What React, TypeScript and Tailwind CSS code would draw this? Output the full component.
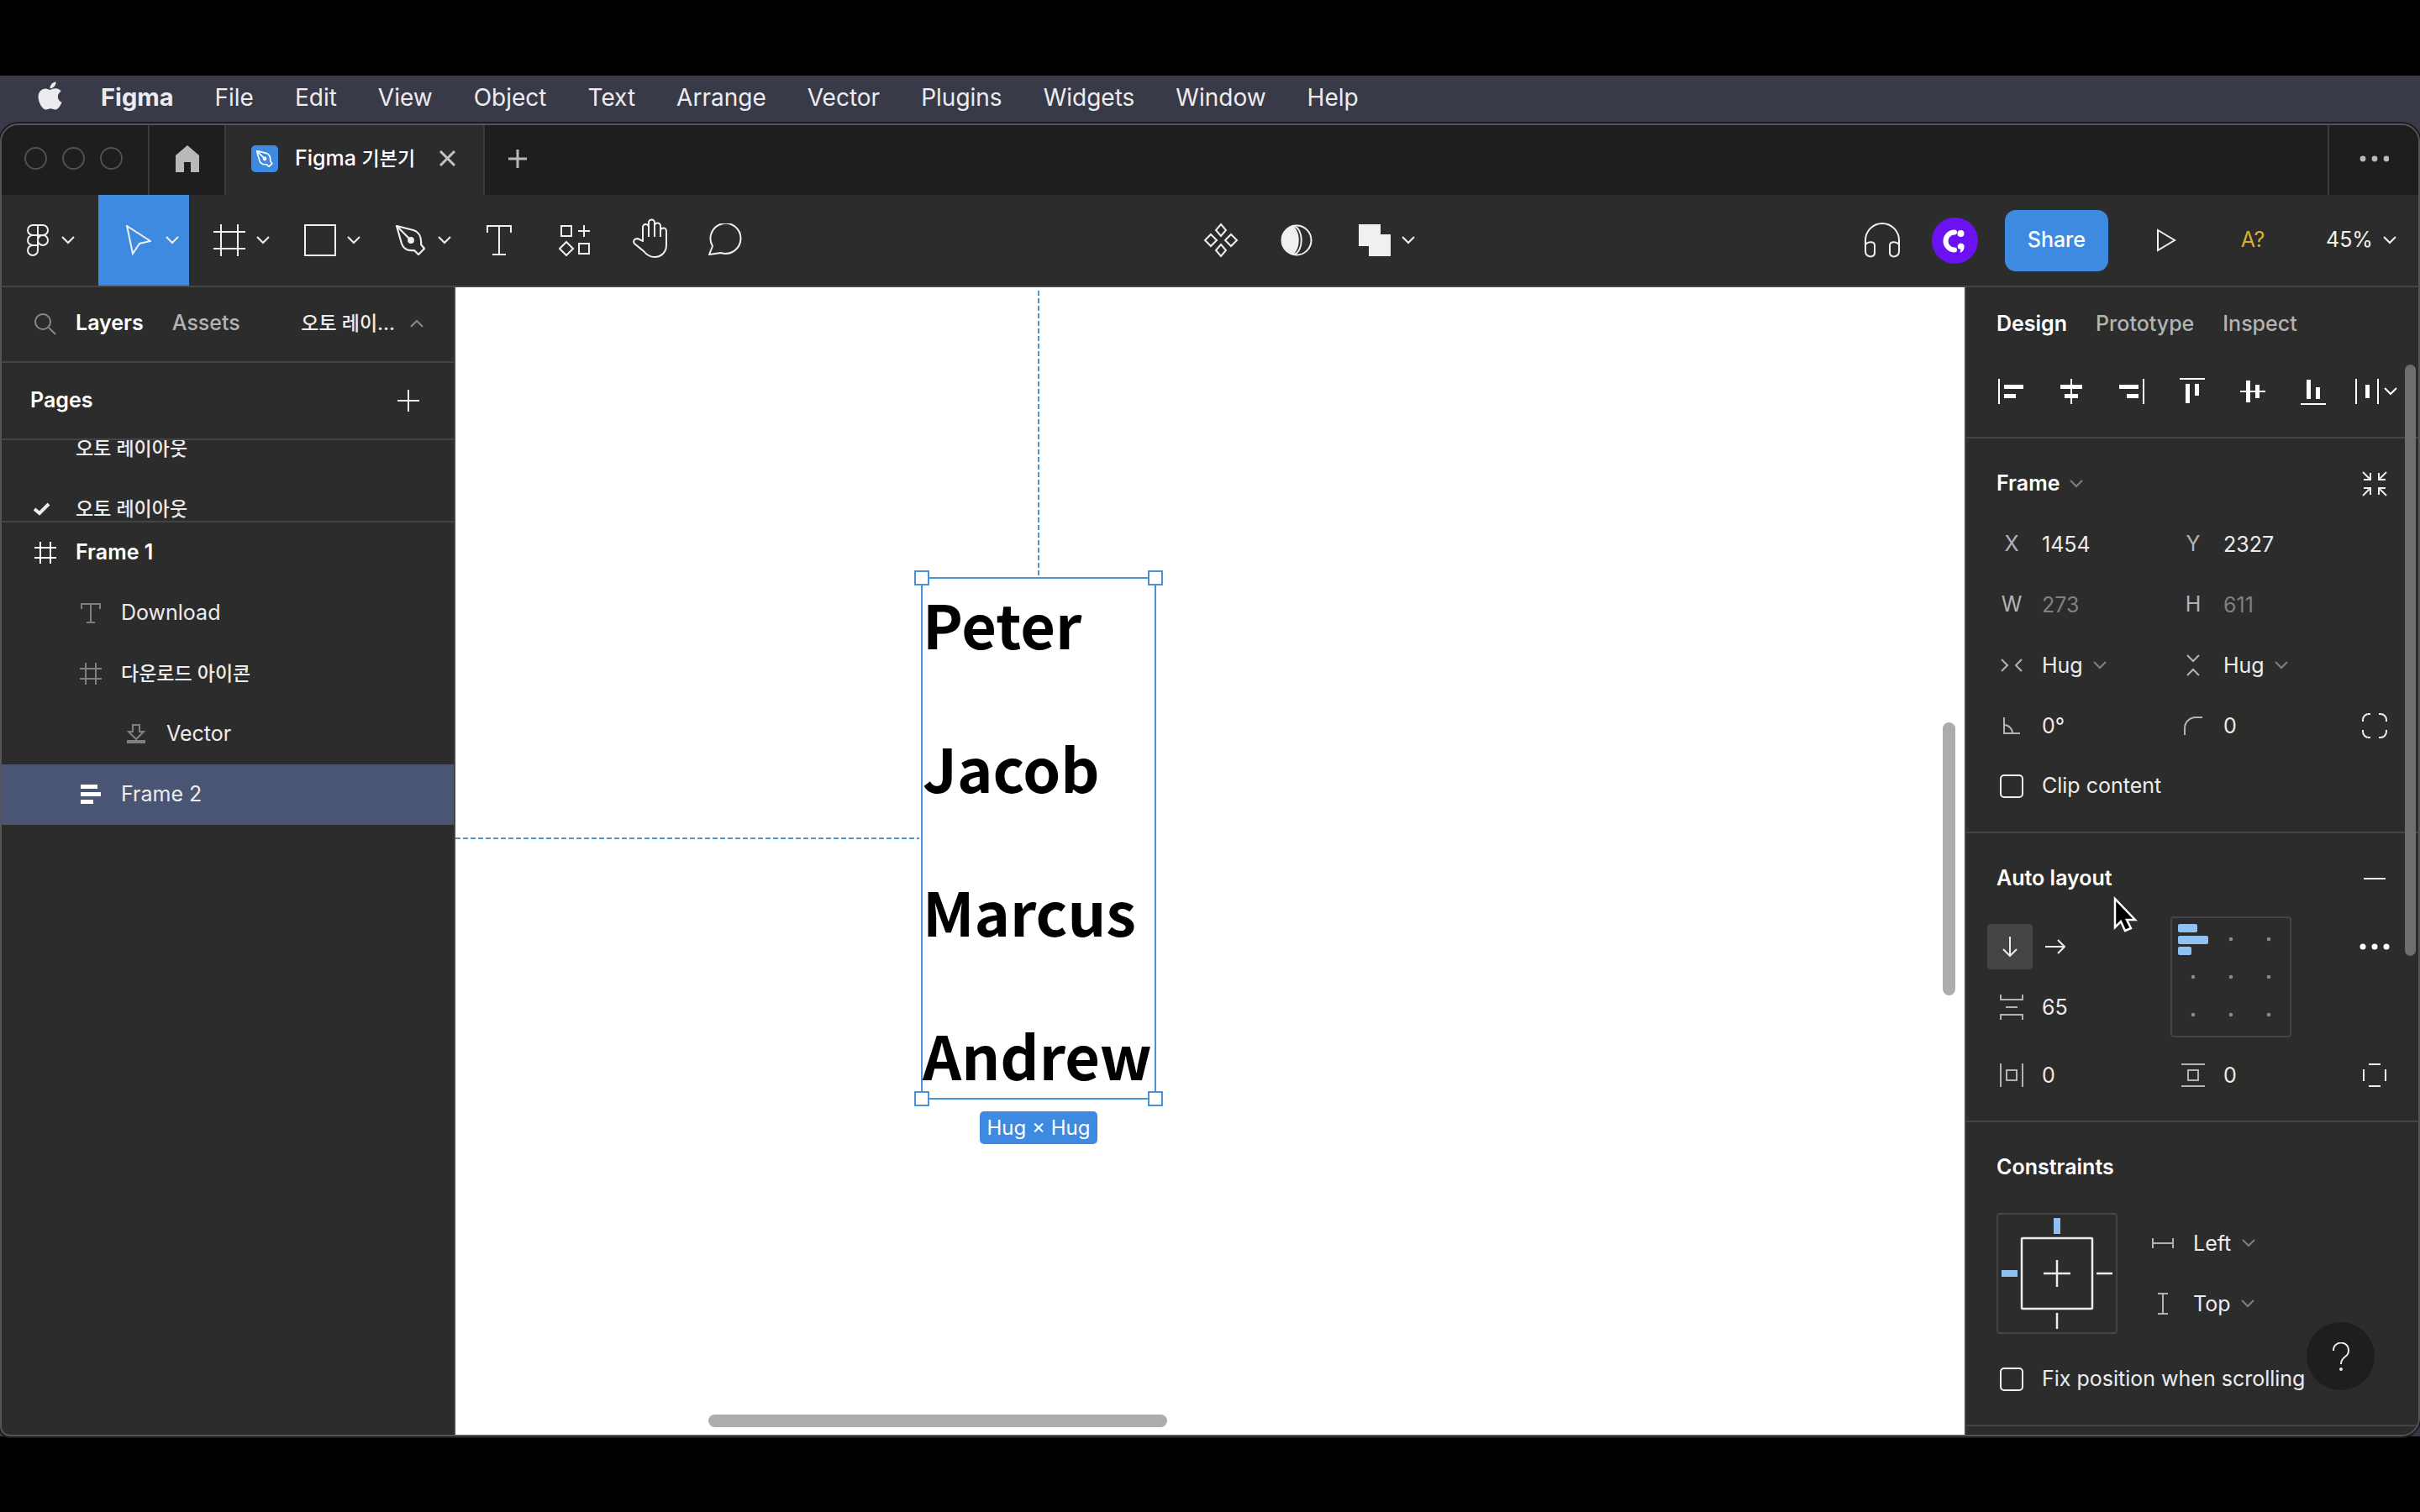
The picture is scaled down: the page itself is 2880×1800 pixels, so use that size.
import type { ReactNode } from "react";
import { FaApple } from "react-icons/fa";

const menus = [
  "File",
  "Edit",
  "View",
  "Object",
  "Text",
  "Arrange",
  "Vector",
  "Plugins",
  "Widgets",
  "Window",
  "Help",
];

const names = ["Peter", "Jacob", "Marcus", "Andrew"];

type IconProps = {
  w: number;
  h: number;
  stroke?: number;
  className?: string;
  children: ReactNode;
};

function Icon({ w, h, stroke = 2, className = "", children }: IconProps) {
  return (
    <svg
      width={w}
      height={h}
      viewBox={`0 0 ${w} ${h}`}
      fill="none"
      stroke="currentColor"
      strokeWidth={stroke}
      className={`shrink-0 ${className}`}
      aria-hidden="true"
    >
      {children}
    </svg>
  );
}

function Chevron({ className = "" }: { className?: string }) {
  return (
    <Icon w={16} h={10} className={className}>
      <path d="M1 1l7 7 7-7" />
    </Icon>
  );
}

function FrameIcon({ className = "" }: { className?: string }) {
  return (
    <Icon w={26} h={26} className={className}>
      <path d="M7 0v26M19 0v26M0 7h26M0 19h26" />
    </Icon>
  );
}

function PenIcon({ w = 36 }: { w?: number }) {
  return (
    <svg
      width={w}
      height={w}
      viewBox="0 0 36 36"
      fill="none"
      stroke="currentColor"
      strokeWidth={w < 30 ? 3 : 2.2}
      aria-hidden="true"
    >
      <path d="M1 1l20 5c6 2 10 8 9 17l4 5-7 7-5-5c-8 1-13-2-15-8z" strokeLinejoin="round" />
      <path d="M1 1l16 16" />
      <circle cx="18" cy="18" r="2.8" fill="currentColor" />
    </svg>
  );
}

function MenuBar() {
  return (
    <nav className="flex h-[55px] shrink-0 items-center bg-[#393a47] pb-1 pl-11 text-[28px] leading-9 text-[#ececf0]">
      <FaApple className="mb-1 mr-[45px] h-[38px] w-[31px]" />
      <ul className="flex items-center gap-[49px]">
        <li>
          <button className="text-[29px] font-bold">Figma</button>
        </li>
        {menus.map((m) => (
          <li key={m}>
            <button>{m}</button>
          </li>
        ))}
      </ul>
    </nav>
  );
}

function TabBar() {
  return (
    <div className="flex h-[83px] shrink-0 bg-[#1e1e1e] text-[#b9b9b9]">
      <div className="flex w-[176px] items-center gap-[18px] border-r-2 border-[#3b3b3b] pb-1 pl-[27px]">
        <button aria-label="Close window" className="size-[27px] rounded-full border-2 border-[#505050]" />
        <button aria-label="Minimize window" className="size-[27px] rounded-full border-2 border-[#505050]" />
        <button aria-label="Zoom window" className="size-[27px] rounded-full border-2 border-[#505050]" />
      </div>
      <button
        aria-label="Home"
        className="flex w-[91px] items-center justify-center border-r-2 border-[#3b3b3b] pb-1"
      >
        <Icon w={28} h={32}>
          <path d="M0 12L14 0l14 12v20H18V20h-8v12H0z" fill="currentColor" stroke="none" />
        </Icon>
      </button>
      <div className="flex w-[308px] items-center border-r-2 border-[#3b3b3b] bg-[#2c2c2c] pb-1 pl-[30px] font-medium text-white">
        <span className="mr-5 flex size-8 items-center justify-center rounded-[5px] bg-[#3d8ae0]">
          <PenIcon w={20} />
        </span>
        <span>
          Figma <span className="text-[23px]">기본기</span>
        </span>
        <button aria-label="Close tab" className="ml-auto mr-[33px] text-[#c4c4c4]">
          <Icon w={19} h={19} stroke={3}>
            <path d="M1 1l17 17M18 1L1 18" />
          </Icon>
        </button>
      </div>
      <button aria-label="New tab" className="flex w-[78px] items-center justify-center pb-1">
        <Icon w={22} h={22} stroke={3}>
          <path d="M11 0v22M0 11h22" />
        </Icon>
      </button>
      <button
        aria-label="More"
        className="ml-auto flex w-[108px] items-center justify-center border-l-2 border-[#3b3b3b] pb-1"
      >
        <Icon w={36} h={8}>
          <g fill="currentColor" stroke="none">
            <circle cx="5" cy="4" r="3.4" />
            <circle cx="19" cy="4" r="3.4" />
            <circle cx="33" cy="4" r="3.4" />
          </g>
        </Icon>
      </button>
    </div>
  );
}

function Tool({
  label,
  active,
  menu,
  children,
}: {
  label: string;
  active?: boolean;
  menu?: boolean;
  children: ReactNode;
}) {
  return (
    <button
      aria-label={label}
      className={`flex h-full items-center ${menu ? "w-[108px] pr-3 pl-4" : "w-[90px]"} ${
        active ? "bg-[#3d8ae0]" : ""
      }`}
    >
      <span className="flex flex-1 justify-center">{children}</span>
      {menu && <Chevron />}
    </button>
  );
}

function Toolbar() {
  return (
    <div className="flex h-[110px] shrink-0 items-center border-b-2 border-[#444] bg-[#2c2c2c] text-[#f0f0f0]">
      <div className="flex h-full items-center">
        <button aria-label="Main menu" className="flex h-full w-[115px] items-center gap-[15px] pl-[30px]">
          <Icon w={26} h={38} stroke={2}>
            <path d="M13 1H7a6 6 0 0 0 0 12h6zM13 1h6a6 6 0 0 1 0 12h-6zM13 13H7a6 6 0 0 0 0 12h6zM13 25H7a6 6 0 1 0 6 6z" />
            <circle cx="19" cy="19" r="6" />
          </Icon>
          <Chevron />
        </button>
        <Tool label="Move" menu active>
          <Icon w={30} h={36} stroke={2}>
            <path d="M1 1l28 18-13 3-8 12z" />
          </Icon>
        </Tool>
        <Tool label="Frame" menu>
          <Icon w={38} h={38}>
            <path d="M9 0v38M29 0v38M0 9h38M0 29h38" />
          </Icon>
        </Tool>
        <Tool label="Rectangle" menu>
          <Icon w={38} h={38}>
            <path d="M1 1h36v36H1z" />
          </Icon>
        </Tool>
        <Tool label="Pen" menu>
          <PenIcon />
        </Tool>
        <Tool label="Text">
          <Icon w={30} h={38} stroke={2}>
            <path d="M1 10V2h28v8M15 2v34M7 36h16" />
          </Icon>
        </Tool>
        <Tool label="Resources">
          <Icon w={38} h={38} stroke={2}>
            <path d="M3 2h12v12H3zM30 1v14M23 8h14M24 23h12v12H24zM9 21l8 8-8 8-8-8z" />
          </Icon>
        </Tool>
        <Tool label="Hand">
          <Icon w={42} h={48} stroke={2} className="-mt-1">
            <path
              d="M12 27V11a3.5 3.5 0 0 1 7-1V5a3.5 3.5 0 0 1 7 0v4a3.5 3.5 0 0 1 7 0v6a3.5 3.5 0 0 1 7 0v17c0 8-6 14-14 14-5 0-9-2-13-7L2 30c-3-5 3-7 6-5zM19 10v12M26 8v14M33 13v9"
              strokeLinejoin="round"
            />
          </Icon>
        </Tool>
        <Tool label="Comment">
          <Icon w={42} h={40} stroke={2}>
            <path d="M5 27A18 18 0 1 1 15 35L1 37z" strokeLinejoin="round" />
          </Icon>
        </Tool>
      </div>
      <div className="flex h-full flex-1 items-center justify-center">
        <Tool label="Create component">
          <Icon w={42} h={42} stroke={2}>
            <path d="M21 2l6 7-6 7-6-7zM21 26l6 7-6 7-6-7zM9 14l7 7-7 7-7-7zM33 14l7 7-7 7-7-7z" />
          </Icon>
        </Tool>
        <Tool label="Use as mask">
          <Icon w={38} h={38} stroke={2}>
            <circle cx="19" cy="19" r="17.5" />
            <path d="M15 2C24 9 24 29 15 36 6 34 1 27 1 19S6 4 15 2z" fill="currentColor" stroke="none" />
            <path d="M15 2c13 2 13 32 0 34" />
          </Icon>
        </Tool>
        <Tool label="Union selection" menu>
          <Icon w={38} h={38}>
            <path d="M0 0h26v12h12v26H12V26H0z" fill="currentColor" stroke="none" />
          </Icon>
        </Tool>
      </div>
      <div className="flex h-full items-center font-medium">
        <Tool label="Start conversation">
          <Icon w={44} h={42} stroke={2}>
            <path d="M2 34V21a20 20 0 0 1 40 0v13" />
            <path
              d="M2 27c1-4 11-6 11 0v9c0 4-4 5-7 4s-4-3-4-6zM42 27c-1-4-11-6-11 0v9c0 4 4 5 7 4s4-3 4-6z"
              strokeLinejoin="round"
            />
          </Icon>
        </Tool>
        <button aria-label="Account" className="ml-3.5 size-[55px] rounded-full bg-[#6b12f3] text-white">
          <svg viewBox="0 0 55 55" fill="none" aria-hidden="true">
            <path d="M27 17.500a10.500 10.500 0 0 0 0 21" stroke="currentColor" strokeWidth="6" strokeLinecap="round" />
            <circle cx="34.500" cy="19" r="4" fill="currentColor" />
            <path d="M31 36a4 4 0 1 1 7.500 0c-.5 3-2 5-5 6l1-4.500c-2 0-3-.5-3.500-1.500z" fill="currentColor" />
          </svg>
        </button>
        <button className="ml-8 h-[73px] rounded-[13px] bg-[#3d8ae0] px-[27px] text-white">Share</button>
        <button aria-label="Present" className="ml-6 flex w-[90px] justify-center">
          <Icon w={24} h={30}>
            <path d="M2 3l20 12L2 27z" />
          </Icon>
        </button>
        <button className="w-[116px] font-normal text-[#d8b02f]">A?</button>
        <button className="flex w-[139px] items-center gap-3 pl-[29px] font-normal">
          45%
          <Chevron />
        </button>
      </div>
    </div>
  );
}

const layers = [
  { name: "Frame 1", icon: "frame", pad: "pl-[34px]", text: "font-semibold text-white", tint: "text-white" },
  { name: "Download", icon: "text", pad: "pl-[88px]", text: "", tint: "text-[#808080]" },
  { name: "다운로드 아이콘", icon: "frame", pad: "pl-[88px]", text: "text-[23px] font-medium", tint: "text-[#808080]" },
  { name: "Vector", icon: "vector", pad: "pl-[142px]", text: "", tint: "text-[#808080]" },
  { name: "Frame 2", icon: "stack", pad: "pl-[88px]", text: "", tint: "text-white" },
];

function LayerIcon({ icon }: { icon: string }) {
  if (icon === "frame") return <FrameIcon />;
  if (icon === "text")
    return (
      <Icon w={24} h={26}>
        <path d="M1 8V2h22v6M12 2v22M7 24h10" />
      </Icon>
    );
  if (icon === "vector")
    return (
      <Icon w={24} h={24}>
        <path d="M8 1h8v8h5l-9 9-9-9h5z" />
        <path d="M1 21h22" stroke="currentColor" strokeWidth="4" />
      </Icon>
    );
  return (
    <Icon w={24} h={26}>
      <path d="M0 1h20v5H0zM0 10h24v5H0zM0 19h15v5H0z" fill="currentColor" stroke="none" />
    </Icon>
  );
}

function LayersPanel() {
  return (
    <aside className="flex w-[540px] shrink-0 flex-col overflow-hidden border-r-2 border-[#444] bg-[#2c2c2c]">
      <div className="flex h-[90px] shrink-0 items-center border-b-2 border-[#444] pb-0.5 pl-[38px]">
        <button aria-label="Search" className="mr-[23px] text-[#8a8a8a]">
          <Icon w={27} h={27}>
            <circle cx="11" cy="11" r="9" />
            <path d="M18 18l8 8" />
          </Icon>
        </button>
        <button className="mr-[34px] font-semibold text-white">Layers</button>
        <button className="font-medium text-[#b3b3b3]">Assets</button>
        <button className="ml-auto mr-9 flex items-center gap-[18px] text-[23px] font-medium">
          오토 레이...
          <Chevron className="rotate-180 text-[#8a8a8a]" />
        </button>
      </div>
      <div className="flex h-[92px] shrink-0 items-center justify-between border-b-2 border-[#444] pl-[34px] pr-[41px]">
        <h2 className="font-semibold text-white">Pages</h2>
        <button aria-label="Add page">
          <Icon w={26} h={26}>
            <path d="M13 0v26M0 13h26" />
          </Icon>
        </button>
      </div>
      <div className="h-[98px] shrink-0 overflow-hidden border-b-2 border-[#444] text-[23px] font-medium">
        <ul className="-mt-[26px]">
          <li className="flex h-[72px] items-center pl-[88px]">오토 레이아웃</li>
          <li className="flex h-[72px] items-center pl-[38px]">
            <Icon w={20} h={16} stroke={4} className="mr-[30px]">
              <path d="M1 8l6 5L18 2" />
            </Icon>
            오토 레이아웃
          </li>
        </ul>
      </div>
      <ul>
        {layers.map((l) => (
          <li
            key={l.name}
            className={`flex h-[72px] items-center gap-[18px] ${l.pad} ${l.name === "Frame 2" ? "bg-[#4a5573]" : ""}`}
          >
            <span className={`flex w-9 justify-center ${l.tint}`}>
              <LayerIcon icon={l.icon} />
            </span>
            <span className={l.text}>{l.name}</span>
          </li>
        ))}
      </ul>
    </aside>
  );
}

function Canvas() {
  return (
    <main className="relative min-w-0 flex-1 overflow-hidden bg-white">
      {/* constraint guides */}
      <svg className="absolute left-0 top-0 h-full w-full" stroke="#4f95cf" strokeWidth="2" aria-hidden="true">
        <path d="M694 4v340" strokeDasharray="6 3" />
        <path d="M0 656h552" strokeDasharray="6 3" />
      </svg>
      <div className="absolute left-[554px] top-[345px] border-2 border-[#4a93d6]">
        <div className="flex flex-col gap-[66px] pr-[3px] font-['Noto_Sans_CJK_KR',sans-serif] text-[72px] font-bold leading-[105px] text-black">
          {names.map((n) => (
            <p key={n}>{n}</p>
          ))}
        </div>
        <span className="absolute -left-2.5 -top-2.5 size-[18px] border-2 border-[#4a93d6] bg-white" />
        <span className="absolute -right-2.5 -top-2.5 size-[18px] border-2 border-[#4a93d6] bg-white" />
        <span className="absolute -bottom-2.5 -left-2.5 size-[18px] border-2 border-[#4a93d6] bg-white" />
        <span className="absolute -bottom-2.5 -right-2.5 size-[18px] border-2 border-[#4a93d6] bg-white" />
        <div className="absolute inset-x-0 top-full flex justify-center pt-4">
          <span className="whitespace-nowrap rounded-[5px] bg-[#3d8ae0] px-[9px] py-1 text-[24px] leading-[31px] text-white">
            Hug × Hug
          </span>
        </div>
      </div>
      <div className="absolute right-[11px] top-[518px] h-[325px] w-[15px] rounded-full bg-[#acacac]" />
      <div className="absolute bottom-[9px] left-[301px] h-[15px] w-[546px] rounded-full bg-[#acacac]" />
    </main>
  );
}

function Field({
  label,
  value,
  icon,
  muted,
}: {
  label: string;
  value: string;
  icon?: ReactNode;
  muted?: boolean;
}) {
  return (
    <label className="flex h-[72px] items-center gap-[18px]">
      <span className="flex w-9 shrink-0 justify-center text-[#b3b3b3]">{icon ?? label}</span>
      <input
        aria-label={label}
        defaultValue={value}
        className={`w-[120px] bg-transparent pt-0.5 outline-none ${muted ? "text-[#808080]" : ""}`}
      />
    </label>
  );
}

function SelectField({ label, value, icon }: { label: string; value: string; icon: ReactNode }) {
  return (
    <label className="flex h-[72px] items-center gap-[18px]">
      <span className="flex w-9 shrink-0 justify-center text-[#b3b3b3]">{icon}</span>
      <span className="flex items-center gap-3">
        <select aria-label={label} className="appearance-none bg-transparent pt-0.5 outline-none">
          <option>{value}</option>
        </select>
        <Chevron className="text-[#808080]" />
      </span>
    </label>
  );
}

function Check({ label }: { label: string }) {
  return (
    <label className="flex h-[72px] items-center gap-[22px] pl-1">
      <input type="checkbox" className="size-7 appearance-none rounded-[5px] border-2 border-[#f0f0f0]" />
      {label}
    </label>
  );
}

function AlignRow() {
  return (
    <div className="mb-[18px] flex h-[72px] pl-[17px] text-white">
      <button aria-label="Align left" className="flex w-[72px] items-center justify-center">
        <Icon w={30} h={30}>
          <path d="M1 0v30" />
          <path d="M7 7h23v5H7zM7 18h14v5H7z" fill="currentColor" stroke="none" />
        </Icon>
      </button>
      <button aria-label="Align horizontal centers" className="flex w-[72px] items-center justify-center">
        <Icon w={26} h={30}>
          <path d="M13 0v30" />
          <path d="M0 7h26v5H0zM5 18h16v5H5z" fill="currentColor" stroke="none" />
        </Icon>
      </button>
      <button aria-label="Align right" className="flex w-[72px] items-center justify-center">
        <Icon w={30} h={30}>
          <path d="M29 0v30" />
          <path d="M0 7h23v5H0zM9 18h14v5H9z" fill="currentColor" stroke="none" />
        </Icon>
      </button>
      <button aria-label="Align top" className="flex w-[72px] items-center justify-center">
        <Icon w={30} h={32}>
          <path d="M0 1h30" />
          <path d="M7 7h5v23H7zM18 7h5v14h-5z" fill="currentColor" stroke="none" />
        </Icon>
      </button>
      <button aria-label="Align vertical centers" className="flex w-[72px] items-center justify-center">
        <Icon w={30} h={26}>
          <path d="M0 13h30" />
          <path d="M7 0h5v26H7zM18 5h5v16h-5z" fill="currentColor" stroke="none" />
        </Icon>
      </button>
      <button aria-label="Align bottom" className="flex w-[72px] items-center justify-center">
        <Icon w={30} h={32}>
          <path d="M0 31h30" />
          <path d="M7 2h5v23H7zM18 11h5v14h-5z" fill="currentColor" stroke="none" />
        </Icon>
      </button>
      <button aria-label="Distribute" className="flex items-center gap-1.5 pl-[14px]">
        <Icon w={28} h={30}>
          <path d="M1 0v30M27 0v30" />
          <path d="M12 7h5v16h-5z" fill="currentColor" stroke="none" />
        </Icon>
        <Chevron />
      </button>
    </div>
  );
}

function FrameSection() {
  return (
    <section className="border-t-2 border-[#444] py-[18px] pl-9">
      <div className="grid grid-cols-[216px_216px_36px]">
        <button className="col-span-2 flex h-[72px] items-center gap-3 font-semibold text-white">
          Frame
          <Chevron className="text-[#808080]" />
        </button>
        <button aria-label="Resize to fit" className="flex items-center justify-center">
          <Icon w={30} h={30} stroke={2}>
            <path d="M1 1l8 8M29 1l-8 8M1 29l8-8M29 29l-8-8" />
            <path d="M2 10h8V2M28 10h-8V2M2 20h8v8M28 20h-8v8" />
          </Icon>
        </button>
        <Field label="X" value="1454" />
        <Field label="Y" value="2327" />
        <span />
        <Field label="W" value="273" muted />
        <Field label="H" value="611" muted />
        <span />
        <SelectField
          label="Horizontal resizing"
          value="Hug"
          icon={
            <Icon w={26} h={16}>
              <path d="M1 1l7 7-7 7M25 1l-7 7 7 7" />
            </Icon>
          }
        />
        <SelectField
          label="Vertical resizing"
          value="Hug"
          icon={
            <Icon w={16} h={26}>
              <path d="M1 1l7 7 7-7M1 25l7-7 7 7" />
            </Icon>
          }
        />
        <span />
        <Field
          label="Rotation"
          value="0°"
          icon={
            <Icon w={20} h={20}>
              <path d="M1 0v19h19M1 9a10 10 0 0 1 10 10" />
            </Icon>
          }
        />
        <Field
          label="Corner radius"
          value="0"
          icon={
            <Icon w={22} h={22}>
              <path d="M1 22v-8A13 13 0 0 1 14 1h8" />
            </Icon>
          }
        />
        <button aria-label="Independent corners" className="flex items-center justify-center">
          <Icon w={30} h={30}>
            <path d="M1 10V8a7 7 0 0 1 7-7h2M20 1h2a7 7 0 0 1 7 7v2M29 20v2a7 7 0 0 1-7 7h-2M10 29H8a7 7 0 0 1-7-7v-2" />
          </Icon>
        </button>
      </div>
      <Check label="Clip content" />
    </section>
  );
}

function AutoLayoutSection() {
  return (
    <section className="relative border-t-2 border-[#444] py-[18px] pl-9">
      <div className="grid grid-cols-[216px_216px_36px]">
        <h2 className="col-span-2 flex h-[72px] items-center font-semibold text-white">Auto layout</h2>
        <button aria-label="Remove auto layout" className="flex items-center justify-center">
          <Icon w={26} h={2}>
            <path d="M0 1h26" />
          </Icon>
        </button>
      </div>
      <div className="my-[9px] grid grid-cols-[216px_216px_36px]">
        <div>
          <div className="-ml-[11px] flex h-[72px] items-center">
            <button
              aria-label="Vertical direction"
              className="flex size-[54px] items-center justify-center rounded-[4px] bg-[#444]"
            >
              <Icon w={18} h={24}>
                <path d="M9 0v22M1 15l8 8 8-8" />
              </Icon>
            </button>
            <button aria-label="Horizontal direction" className="flex size-[54px] items-center justify-center">
              <Icon w={24} h={18}>
                <path d="M0 9h22M15 1l8 8-8 8" />
              </Icon>
            </button>
          </div>
          <Field
            label="Gap between items"
            value="65"
            icon={
              <Icon w={28} h={30}>
                <path d="M1 0v6h26V0M1 30v-6h26v6M7 15h14" />
              </Icon>
            }
          />
        </div>
        <button aria-label="Alignment" className="-ml-[9px] size-36 rounded-[4px] border-2 border-[#444]">
          <svg viewBox="0 0 140 140" aria-hidden="true">
            <g fill="#8fc2f3">
              <rect x="7" y="7" width="23" height="10" rx="2" />
              <rect x="7" y="21" width="36" height="10" rx="2" />
              <rect x="7" y="34" width="16" height="10" rx="2" />
            </g>
            <g fill="#8a8a8a">
              <circle cx="70" cy="25" r="2.300" />
              <circle cx="115" cy="25" r="2.300" />
              <circle cx="25" cy="70" r="2.300" />
              <circle cx="70" cy="70" r="2.300" />
              <circle cx="115" cy="70" r="2.300" />
              <circle cx="25" cy="115" r="2.300" />
              <circle cx="70" cy="115" r="2.300" />
              <circle cx="115" cy="115" r="2.300" />
            </g>
          </svg>
        </button>
        <button aria-label="Advanced layout" className="flex h-[72px] items-center justify-center text-white">
          <Icon w={36} h={8}>
            <g fill="currentColor" stroke="none">
              <circle cx="4" cy="4" r="3.5" />
              <circle cx="18" cy="4" r="3.5" />
              <circle cx="32" cy="4" r="3.5" />
            </g>
          </Icon>
        </button>
      </div>
      <div className="grid grid-cols-[216px_216px_36px]">
        <Field
          label="Horizontal padding"
          value="0"
          icon={
            <Icon w={28} h={28}>
              <path d="M1 0v28M27 0v28M8 8h12v12H8z" />
            </Icon>
          }
        />
        <Field
          label="Vertical padding"
          value="0"
          icon={
            <Icon w={28} h={28}>
              <path d="M0 1h28M0 27h28M8 8h12v12H8z" />
            </Icon>
          }
        />
        <button aria-label="Individual padding" className="flex items-center justify-center">
          <Icon w={28} h={28}>
            <path d="M7 1h14M7 27h14M1 7v14M27 7v14" />
          </Icon>
        </button>
      </div>
      {/* mouse pointer */}
      <svg
        className="absolute left-[175px] top-[75px] z-10"
        width="30"
        height="46"
        viewBox="0 0 30 46"
        aria-hidden="true"
      >
        <path
          d="M2 3v34l7-7 5 11 7-3-5-10h10z"
          fill="#000"
          stroke="#fff"
          strokeWidth="2.500"
        />
      </svg>
    </section>
  );
}

function ConstraintsSection() {
  return (
    <section className="border-y-2 border-[#444] py-[18px] pl-9">
      <h2 className="flex h-[72px] items-center font-semibold text-white">Constraints</h2>
      <div className="my-[18px] flex gap-9">
        <button aria-label="Constraints" className="size-36 rounded-[4px] border-2 border-[#444]">
          <svg viewBox="0 0 140 140" fill="none" stroke="currentColor" aria-hidden="true">
            <rect x="28" y="28" width="84" height="84" rx="1" strokeWidth="2.500" />
            <path d="M70 54v32M54 70h32M70 117v19M117 70h19" strokeWidth="2.500" />
            <path d="M70 4v19M4 70h19" stroke="#8fc2f3" strokeWidth="8" />
          </svg>
        </button>
        <div>
          <SelectField
            label="Horizontal constraint"
            value="Left"
            icon={
              <Icon w={26} h={12}>
                <path d="M1 0v12M25 0v12M1 6h24" />
              </Icon>
            }
          />
          <SelectField
            label="Vertical constraint"
            value="Top"
            icon={
              <Icon w={12} h={26}>
                <path d="M0 1h12M0 25h12M6 1v24" />
              </Icon>
            }
          />
        </div>
      </div>
      <Check label="Fix position when scrolling" />
    </section>
  );
}

function DesignPanel() {
  return (
    <aside className="relative w-[540px] shrink-0 overflow-hidden border-l-2 border-[#444] bg-[#2c2c2c]">
      <div className="flex h-[88px] items-center gap-[34px] pl-9 font-medium text-[#b3b3b3]">
        <button className="font-semibold text-white">Design</button>
        <button>Prototype</button>
        <button>Inspect</button>
      </div>
      <AlignRow />
      <FrameSection />
      <AutoLayoutSection />
      <ConstraintsSection />
      <div className="absolute right-[3px] top-[92px] h-[704px] w-[13px] rounded-full bg-[#6e6e6e]" />
      <button
        aria-label="Help"
        className="absolute bottom-[53px] right-[52px] flex size-[81px] items-center justify-center rounded-full bg-[#1e1e1e]"
      >
        <Icon w={22} h={34} stroke={2}>
          <path d="M2 10a9 9 0 1 1 14 7c-4 3-5 5-5 9" />
          <circle cx="11" cy="32" r="1" fill="currentColor" />
        </Icon>
      </button>
    </aside>
  );
}

export default function App() {
  return (
    <div className="flex h-screen flex-col bg-black py-[90px] font-['Inter','Noto_Sans_CJK_KR',sans-serif]">
      <MenuBar />
      <div className="flex min-h-0 flex-1 flex-col bg-[#393a47]">
        <div className="mt-0.5 flex min-h-0 flex-1 flex-col overflow-hidden rounded-[22px] rounded-bl-[12px] border-2 border-[#555] bg-[#2c2c2c] text-[25px] text-[#ececec] shadow-[0_0_0_2px_#1c1c20]">
          <TabBar />
          <Toolbar />
          <div className="flex min-h-0 flex-1">
            <LayersPanel />
            <Canvas />
            <DesignPanel />
          </div>
        </div>
      </div>
    </div>
  );
}
